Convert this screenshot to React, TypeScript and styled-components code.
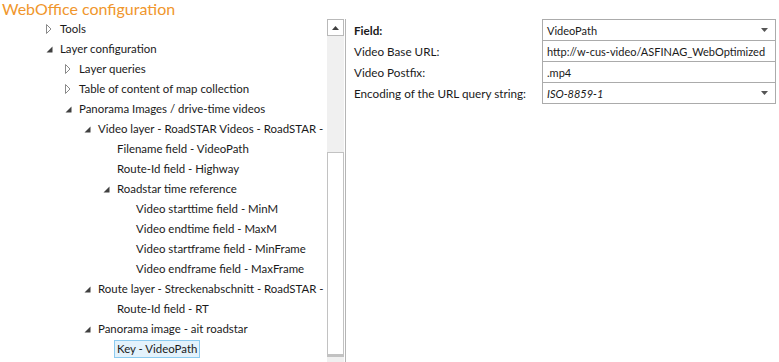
import React from 'react';
import styled, { createGlobalStyle } from 'styled-components';

const GlobalStyle = createGlobalStyle`
  html, body {
    margin: 0;
    padding: 0;
    background: #ffffff;
  }
  body {
    font-family: Lato, "Noto Sans", sans-serif;
    font-size: 11.7px;
    color: #1a1a1a;
  }
`;

interface TreeNode {
  label: string;
  level: number;
  expander?: 'open' | 'closed';
  selected?: boolean;
}

const treeNodes: TreeNode[] = [
  { label: 'Tools', level: 1, expander: 'closed' },
  { label: 'Layer configuration', level: 1, expander: 'open' },
  { label: 'Layer queries', level: 2, expander: 'closed' },
  { label: 'Table of content of map collection', level: 2, expander: 'closed' },
  { label: 'Panorama Images / drive-time videos', level: 2, expander: 'open' },
  { label: 'Video layer - RoadSTAR Videos - RoadSTAR -', level: 3, expander: 'open' },
  { label: 'Filename field - VideoPath', level: 4 },
  { label: 'Route-Id field - Highway', level: 4 },
  { label: 'Roadstar time reference', level: 4, expander: 'open' },
  { label: 'Video starttime field - MinM', level: 5 },
  { label: 'Video endtime field - MaxM', level: 5 },
  { label: 'Video startframe field - MinFrame', level: 5 },
  { label: 'Video endframe field - MaxFrame', level: 5 },
  { label: 'Route layer - Streckenabschnitt - RoadSTAR -', level: 3, expander: 'open' },
  { label: 'Route-Id field - RT', level: 4 },
  { label: 'Panorama image - ait roadstar', level: 3, expander: 'open' },
  { label: 'Key - VideoPath', level: 4, selected: true },
];

interface FormRow {
  label: string;
  value: string;
  bold?: boolean;
  italic?: boolean;
  dropdown?: boolean;
}

const formRows: FormRow[] = [
  { label: 'Field:', value: 'VideoPath', bold: true, dropdown: true },
  { label: 'Video Base URL:', value: 'http://w-cus-video/ASFINAG_WebOptimized' },
  { label: 'Video Postfix:', value: '.mp4' },
  { label: 'Encoding of the URL query string:', value: 'ISO-8859-1', italic: true, dropdown: true },
];

const Expander: React.FC<{ kind: 'open' | 'closed' }> = ({ kind }) =>
  kind === 'open' ? (
    <svg width="7" height="7" viewBox="0 0 7 7">
      <path d="M6.5 0.5 L6.5 6.5 L0.5 6.5 Z" fill="#404040" />
    </svg>
  ) : (
    <svg width="6" height="10" viewBox="0 0 6 10">
      <path d="M0.5 0.5 L5 5 L0.5 9.5 Z" fill="none" stroke="#8a8a8a" strokeWidth="1" />
    </svg>
  );

const DropArrow = () => (
  <svg width="7" height="4" viewBox="0 0 7 4">
    <path d="M0 0 L7 0 L3.5 4 Z" fill="#555" />
  </svg>
);

const App: React.FC = () => (
  <>
    <GlobalStyle />
    <Page>
      <Title>WebOffice configuration</Title>
      <Split>
        <TreePane>
          <TreeList>
            {treeNodes.map((node, i) => (
              <TreeRow key={i} level={node.level}>
                <ExpanderSlot>{node.expander && <Expander kind={node.expander} />}</ExpanderSlot>
                <ItemLabel selected={!!node.selected}>{node.label}</ItemLabel>
              </TreeRow>
            ))}
          </TreeList>
          <ScrollBar>
            <ScrollButton>
              <svg width="7" height="4" viewBox="0 0 7 4">
                <path d="M0 4 L7 4 L3.5 0 Z" fill="#404040" />
              </svg>
            </ScrollButton>
            <ScrollTrack />
            <ScrollThumb />
          </ScrollBar>
        </TreePane>
        <Divider />
        <FormPane>
          {formRows.map((row) => (
            <FieldRow key={row.label}>
              <FieldLabel bold={!!row.bold}>{row.label}</FieldLabel>
              <FieldBox>
                <FieldValue italic={!!row.italic}>{row.value}</FieldValue>
                {row.dropdown && <DropArrow />}
              </FieldBox>
            </FieldRow>
          ))}
        </FormPane>
      </Split>
    </Page>
  </>
);

const Page = styled.div`
  width: 779px;
  height: 362px;
  overflow: hidden;
  display: flex;
  flex-direction: column;
`;

const Title = styled.div`
  height: 19px;
  line-height: 18px;
  padding-left: 2px;
  font-size: 16px;
  color: #f0962c;
  white-space: nowrap;
`;

const Split = styled.div`
  flex: 1;
  display: flex;
  min-height: 0;
`;

const TreePane = styled.div`
  width: 344px;
  display: flex;
`;

const TreeList = styled.div`
  flex: 1;
  min-width: 0;
  overflow: hidden;
  display: flex;
  flex-direction: column;
  font-size: 11.45px;
`;

const TreeRow = styled.div<{ level: number }>`
  height: 20px;
  flex-shrink: 0;
  display: flex;
  align-items: center;
  padding-left: ${(p) => 44 + (p.level - 1) * 19}px;
  white-space: nowrap;
`;

const ExpanderSlot = styled.span`
  width: 13px;
  flex-shrink: 0;
  display: flex;
  align-items: center;
  padding-left: 2px;
  box-sizing: border-box;
`;

const ItemLabel = styled.span<{ selected: boolean }>`
  flex-shrink: 0;
  line-height: 16px;
  padding: 0 2px;
  border: 1px solid ${(p) => (p.selected ? '#8ccbf0' : 'transparent')};
  background: ${(p) => (p.selected ? '#e3f2fc' : 'transparent')};
`;

const ScrollBar = styled.div`
  width: 17px;
  flex-shrink: 0;
  display: flex;
  flex-direction: column;
  background: #f0f0f0;
`;

const ScrollButton = styled.div`
  height: 17px;
  box-sizing: border-box;
  border: 1px solid #b9b9b9;
  background: #ffffff;
  display: flex;
  align-items: center;
  justify-content: center;
`;

const ScrollTrack = styled.div`
  height: 116px;
  background: #f0f0f0;
`;

const ScrollThumb = styled.div`
  height: 205px;
  box-sizing: border-box;
  border: 1px solid #c2c2c2;
  border-bottom-width: 3px;
  background: #ffffff;
`;

const Divider = styled.div`
  width: 1px;
  margin-left: 1px;
  background: #b5b5b5;
`;

const FormPane = styled.div`
  flex: 1;
  padding-left: 8px;
  display: flex;
  flex-direction: column;
`;

const FieldRow = styled.div`
  display: grid;
  grid-template-columns: 188px 234px;
  align-items: center;
  & + & {
    margin-top: -1px;
  }
`;

const FieldLabel = styled.div<{ bold: boolean }>`
  font-weight: ${(p) => (p.bold ? 700 : 400)};
  white-space: nowrap;
`;

const FieldBox = styled.div`
  height: 22px;
  box-sizing: border-box;
  border: 1px solid #ababab;
  padding: 0 7px 0 4px;
  display: flex;
  align-items: center;
  justify-content: space-between;
  overflow: hidden;
  background: #ffffff;
`;

const FieldValue = styled.span<{ italic: boolean }>`
  font-size: 11px;
  font-style: ${(p) => (p.italic ? 'italic' : 'normal')};
  white-space: nowrap;
`;

export default App;
